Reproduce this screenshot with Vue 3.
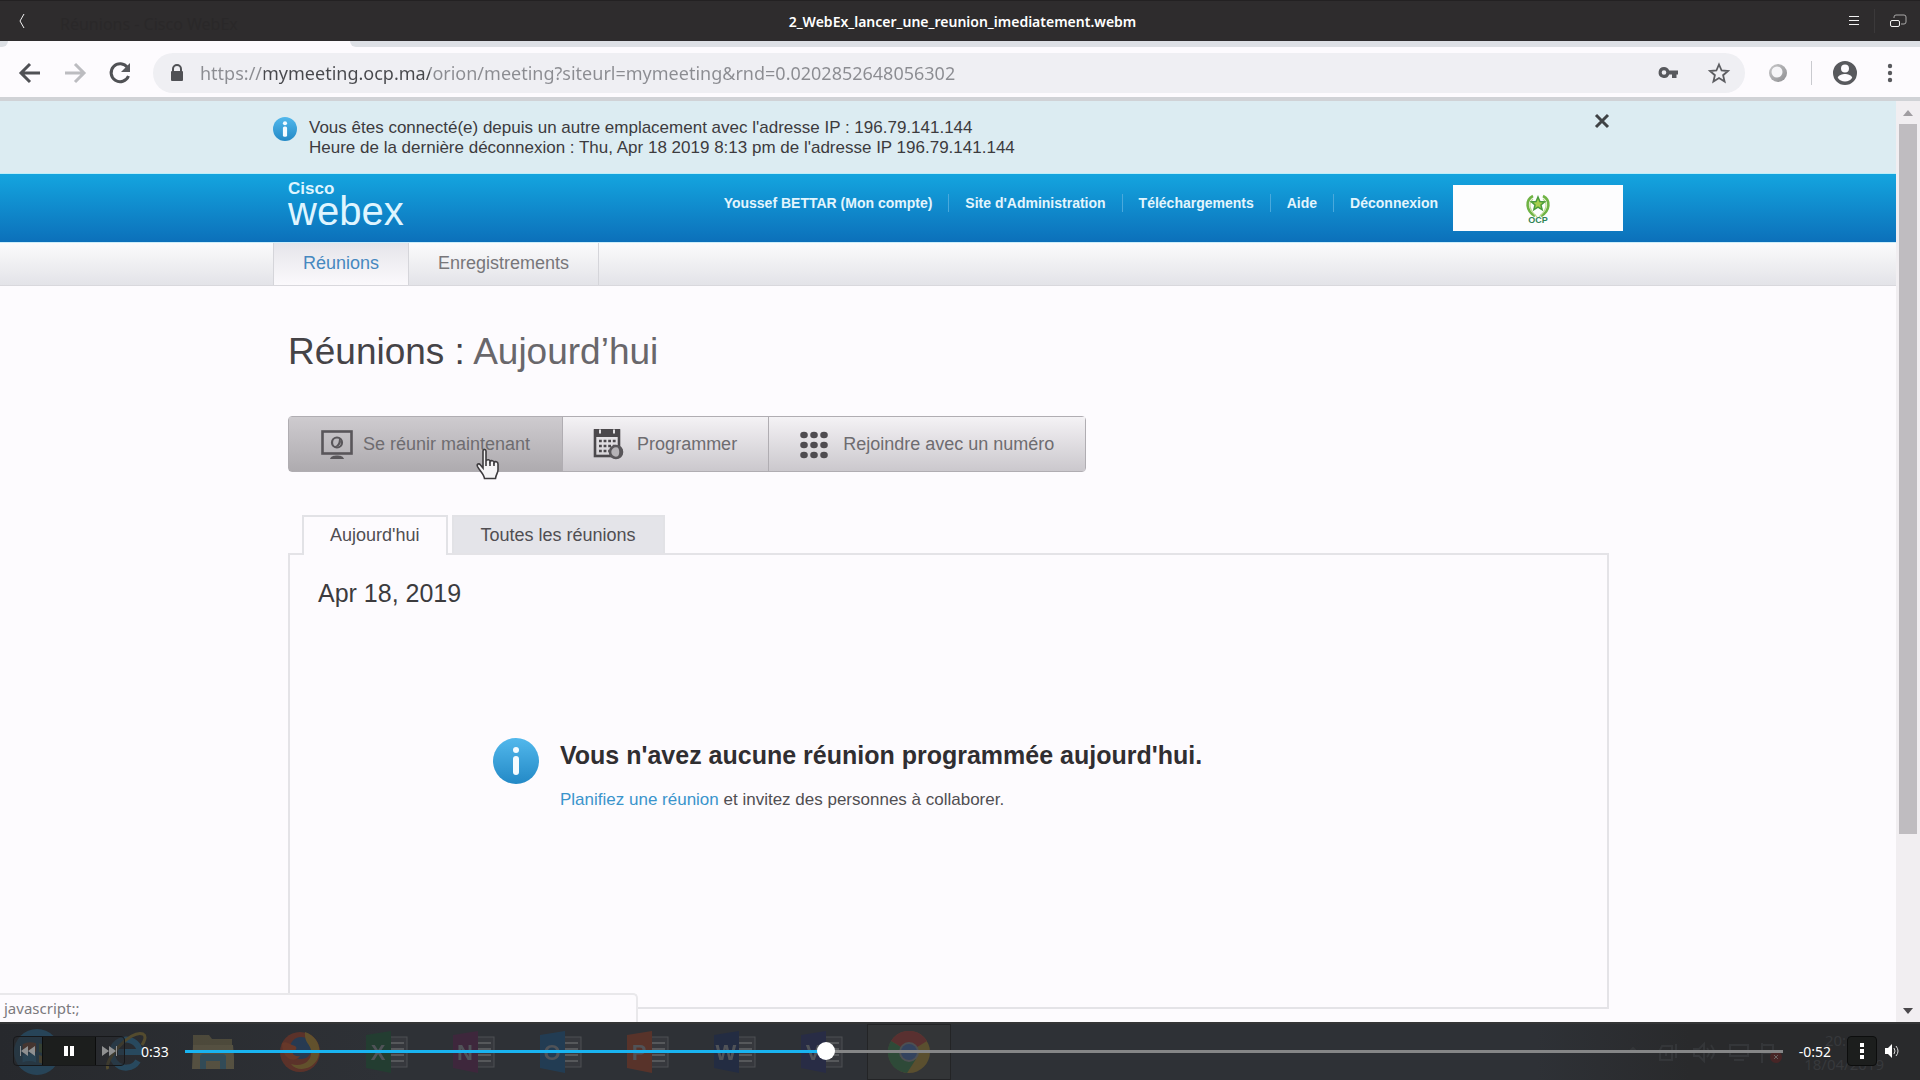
<template>
  <div class="player">
    <header class="title-bar">
      <button class="icon-btn back" aria-label="Retour">
        <svg width="8" height="16" viewBox="0 0 8 16"><path d="M6 1L2 8l4 7" /></svg>
      </button>
      <span class="ghost-tab">Réunions - Cisco WebEx</span>
      <h1 class="file-name">{{ fileName }}</h1>
      <div class="title-actions">
        <button class="icon-btn" aria-label="Menu">
          <svg width="12" height="12" viewBox="0 0 12 12"><path d="M1 1.5h10M1 5.5h10M1 9.5h10" /></svg>
        </button>
        <span class="title-sep"></span>
        <button class="icon-btn" aria-label="Restaurer">
          <svg width="18" height="16" viewBox="0 0 18 16">
            <path class="dim" d="M5 5V4a2 2 0 0 1 2-2h8a2 2 0 0 1 2 2v5a2 2 0 0 1-2 2h-3" />
            <rect x="1.5" y="7.5" width="9" height="6" rx="1.5" />
          </svg>
        </button>
      </div>
    </header>

    <section class="browser">
      <div class="tab-strip">
        <span class="strip-left"></span>
        <span class="strip-tab"></span>
        <span class="strip-rest"></span>
      </div>

      <div class="toolbar">
        <button class="nav-btn" aria-label="Page précédente">
          <svg viewBox="0 0 24 24"><path class="stroke" d="M22 12H4M12 3l-9 9 9 9" /></svg>
        </button>
        <button class="nav-btn disabled" aria-label="Page suivante">
          <svg viewBox="0 0 24 24"><path class="stroke" d="M2 12h18M12 3l9 9-9 9" /></svg>
        </button>
        <button class="nav-btn" aria-label="Actualiser">
          <svg viewBox="0 0 24 24">
            <path class="stroke" d="M19.5 6.5A9 9 0 1 0 20.5 15" />
            <path d="M22 2v9h-9z" />
          </svg>
        </button>
        <div class="omnibox">
          <svg class="lock" viewBox="0 0 16 20">
            <path d="M4 8V6a4 4 0 0 1 8 0v2" fill="none" stroke="#505155" stroke-width="2" />
            <rect x="2" y="8" width="12" height="10" rx="1" />
          </svg>
          <input v-model="url" class="url" type="text" aria-label="Adresse" spellcheck="false" />
          <button class="nav-btn" aria-label="Mots de passe">
            <svg viewBox="0 0 24 24">
              <path fill-rule="evenodd" d="M8 6a5.500 5.500 0 1 0 5.200 7.500H16V17h4.500v-3.500H22V9.500H13.200A5.500 5.500 0 0 0 8 6zM8 9.200a2.300 2.300 0 1 1 0 4.600 2.300 2.300 0 0 1 0-4.600z" />
            </svg>
          </button>
          <button class="nav-btn star" aria-label="Ajouter aux favoris">
            <svg viewBox="0 0 24 24">
              <path d="M12 3.500l2.600 6 6.400.5-4.900 4.200 1.500 6.300-5.600-3.400-5.600 3.400 1.500-6.300L3 10l6.400-.5z" fill="none" stroke="#5c5d61" stroke-width="1.800" />
            </svg>
          </button>
        </div>
        <button class="nav-btn" aria-label="Extension">
          <svg viewBox="0 0 24 24">
            <defs>
              <linearGradient id="ext" x1="0" y1="0" x2="1" y2="1">
                <stop offset="0" stop-color="#c9c9cb" />
                <stop offset="1" stop-color="#8d8d90" />
              </linearGradient>
            </defs>
            <circle cx="12" cy="12" r="9" fill="url(#ext)" />
            <circle cx="11" cy="11" r="5.500" fill="#f6f5f8" />
          </svg>
        </button>
        <span class="tool-sep"></span>
        <button class="nav-btn" aria-label="Profil">
          <svg viewBox="0 0 24 24">
            <path fill-rule="evenodd" d="M12 0a12 12 0 1 0 0 24 12 12 0 0 0 0-24zM12 3.600a4 4 0 1 1 0 8 4 4 0 0 1 0-8zM12 20.600a8.600 8.600 0 0 1-7.200-3.800c0-2.500 4.800-3.800 7.200-3.800s7.200 1.300 7.200 3.800A8.600 8.600 0 0 1 12 20.600z" />
          </svg>
        </button>
        <button class="nav-btn" aria-label="Options">
          <svg viewBox="0 0 24 24"><circle cx="12" cy="5" r="2.200" /><circle cx="12" cy="12" r="2.200" /><circle cx="12" cy="19" r="2.200" /></svg>
        </button>
      </div>

      <div class="viewport">
        <div class="page">
          <div class="notice">
            <div class="wrap notice-row">
              <svg class="info small" viewBox="0 0 46 46">
                <defs>
                  <linearGradient id="blue" x1="0" y1="0" x2="0" y2="1">
                    <stop offset="0" stop-color="#52b8ec" />
                    <stop offset="1" stop-color="#2389c6" />
                  </linearGradient>
                </defs>
                <circle cx="23" cy="23" r="23" fill="url(#blue)" />
                <circle cx="23" cy="12" r="4" fill="#f4fbff" />
                <rect x="19" y="18" width="8" height="20" rx="3" fill="#f4fbff" />
              </svg>
              <p class="notice-text">
                Vous êtes connecté(e) depuis un autre emplacement avec l'adresse IP : 196.79.141.144<br />
                Heure de la dernière déconnexion : Thu, Apr 18 2019 8:13 pm de l'adresse IP 196.79.141.144
              </p>
              <button class="close" aria-label="Fermer">
                <svg width="16" height="16" viewBox="0 0 16 16"><path d="M2 2l12 12M14 2L2 14" /></svg>
              </button>
            </div>
          </div>

          <div class="brand-bar">
            <div class="wrap brand-row">
              <a href="#" class="logo">
                <span class="logo-cisco">Cisco</span>
                <span class="logo-webex">webex</span>
              </a>
              <nav class="links">
                <a v-for="link in links" :key="link" href="#">{{ link }}</a>
              </nav>
              <div class="client">
                <svg width="28" height="32" viewBox="0 0 28 32">
                  <g fill="none" stroke="#6fb344" stroke-width="2.600">
                    <path d="M9 4C1 8 2 19 11 24" />
                    <path d="M19 4c8 4 7 15-2 20" />
                  </g>
                  <g fill="none" stroke="#b9d98f" stroke-width="1.200">
                    <path d="M9 7C4 11 5 18 13 25" />
                    <path d="M19 7c5 4 4 11-4 18" />
                  </g>
                  <path d="M14 5l1.900 4.500 4.700.4-3.600 3.100 1.100 4.700L14 15.200l-4.100 2.500L11 13 7.400 9.900l4.700-.4z" fill="#a8cf4d" stroke="#4a9c3c" stroke-width="1.500" />
                  <text x="14" y="31" text-anchor="middle">OCP</text>
                </svg>
              </div>
            </div>
          </div>

          <div class="menu-bar">
            <nav class="wrap menu-row">
              <a href="#" class="menu-item active">Réunions</a>
              <a href="#" class="menu-item">Enregistrements</a>
            </nav>
          </div>

          <main class="wrap content">
            <h2 class="heading">Réunions : <span>Aujourd’hui</span></h2>

            <div class="actions">
              <button class="action pressed">
                <svg width="32" height="32" viewBox="0 0 32 32">
                  <rect x="1.500" y="3.500" width="29" height="22" fill="none" stroke="#59565a" stroke-width="2.600" />
                  <circle cx="16" cy="14.500" r="5" fill="#bdbabe" stroke="#59565a" stroke-width="2.200" />
                  <path d="M18 10a5 5 0 0 1-5 8.500c4-1 5-4 5-8.500z" fill="#59565a" />
                  <path d="M9 31c1-3 4-3.500 7-3.500s6 .5 7 3.500z" fill="#59565a" />
                </svg>
                Se réunir maintenant
              </button>
              <button class="action">
                <svg width="32" height="32" viewBox="0 0 32 32">
                  <rect x="2" y="2.500" width="24" height="25.500" fill="none" stroke="#4b484c" stroke-width="2.600" />
                  <path d="M1 1h26v8H1z" fill="#4b484c" />
                  <path d="M7 1.500v4M21 1.500v4" stroke="#e3e1e4" stroke-width="2" />
                  <path d="M6 13h17M6 18h17M6 23h10" stroke="#4b484c" stroke-width="2.600" stroke-dasharray="2.800 1.800" />
                  <circle cx="23" cy="24" r="6" fill="#b5b2b6" stroke="#59565a" stroke-width="2.600" />
                  <path d="M24 18a6 6 0 0 1 0 12c3-4 3-8 0-12z" fill="#59565a" />
                </svg>
                Programmer
              </button>
              <button class="action">
                <svg width="32" height="32" viewBox="0 0 32 32">
                  <g v-for="row in 3" :key="row">
                    <ellipse v-for="col in 3" :key="col" :cx="col * 10 - 5" :cy="row * 10 - 3" rx="3.800" ry="3.200" fill="#4f4c50" />
                  </g>
                </svg>
                Rejoindre avec un numéro
              </button>
              <svg class="hand" width="26" height="34" viewBox="0 0 26 34">
                <path d="M8 3c0-2 3-2 3 0v10c1-2 4-1.500 4 .5 1-1.500 4-1 4 1 1-1.500 4-.8 4 1.500v6c0 3-2 4-2.500 8.500H9.500C9 26 4.500 22.500 2.500 18.500 1.500 16 4 15 5.500 17L8 20z" />
                <path d="M11 13v5M15 14v4M19 15v3" />
              </svg>
            </div>

            <div class="tabs">
              <button class="tab active">Aujourd'hui</button>
              <button class="tab">Toutes les réunions</button>
            </div>

            <section class="panel">
              <h3 class="date">Apr 18, 2019</h3>
              <div class="empty">
                <svg class="info" viewBox="0 0 46 46">
                  <circle cx="23" cy="23" r="23" fill="url(#blue)" />
                  <circle cx="23" cy="12" r="3" fill="#f4fbff" />
                  <rect x="20" y="18" width="6" height="19" rx="3" fill="#f4fbff" />
                </svg>
                <div>
                  <h4>Vous n'avez aucune réunion programmée aujourd'hui.</h4>
                  <p><a href="#">Planifiez une réunion</a> et invitez des personnes à collaborer.</p>
                </div>
              </div>
            </section>
          </main>
        </div>

        <div class="scrollbar">
          <svg width="10" height="6" viewBox="0 0 10 6"><path d="M0 6l5-6 5 6z" fill="#a09da1" /></svg>
          <div class="track"><div class="thumb"></div></div>
          <svg width="10" height="6" viewBox="0 0 10 6"><path d="M0 0l5 6 5-6z" fill="#4a484b" /></svg>
        </div>
        <div class="status">javascript:;</div>
      </div>
    </section>

    <footer class="controls">
      <!-- barre des tâches visible sous les commandes -->
      <div class="taskbar" aria-hidden="true">
        <div class="task start">
          <svg viewBox="0 0 50 50">
            <circle cx="25" cy="25" r="24" fill="#27506a" />
            <path d="M10 17q7-4 14-1v9q-7-3-14 0z" fill="#7d4b35" />
            <path d="M27 16q7 3 13 0v9q-6 3-13 0z" fill="#4e6a3b" />
            <path d="M10 28q7-3 14 0v8q-7-3-14 0z" fill="#2d6f96" />
            <path d="M27 28q7 3 13 0v8q-6 3-13 0z" fill="#7d6b36" />
          </svg>
        </div>
        <div class="task">
          <svg viewBox="0 0 42 42">
            <path d="M33 30a14 14 0 1 1 2-9H13" fill="none" stroke="#285672" stroke-width="6" />
            <path d="M3 38C-2 30 25-2 38 3c4 2 1 8-1 11" fill="none" stroke="#66592e" stroke-width="3" />
          </svg>
        </div>
        <div class="task">
          <svg viewBox="0 0 42 42">
            <path d="M1 4h16l3 4h20v28H1z" fill="#5c563f" />
            <path d="M1 14h40l2 24H0z" fill="#686048" />
            <path d="M8 38V26q0-3 3-3h20q3 0 3 3v12h-6v-8H14v8z" fill="#365868" />
          </svg>
        </div>
        <div class="task">
          <svg viewBox="0 0 42 42">
            <circle cx="21" cy="21" r="20" fill="#703426" />
            <circle cx="22" cy="17" r="11" fill="#25405f" />
            <path d="M26 1c12 4 18 16 12 28-6 10-20 12-26 4 12 4 22-4 20-14-1-6-7-8-6-18z" fill="#79602a" />
            <path d="M3 12c4-2 6 0 10 2 5 1 6 4 2 6-3 2 0 6 6 5-6 8-18 3-18-13z" fill="#803c25" />
          </svg>
        </div>
        <div v-for="(app, i) in apps" :key="i" class="task">
          <svg viewBox="0 0 42 42">
            <rect x="22" y="6" width="19" height="30" fill="#3a3c40" stroke="#5b5d60" />
            <path d="M25 12h13M25 18h13M25 24h13M25 30h13" stroke="#67696b" stroke-width="2" />
            <path d="M0 4l25-4v42L0 37z" :fill="app.color" />
            <text x="12" y="29" text-anchor="middle">{{ app.letter }}</text>
          </svg>
        </div>
        <div class="task current">
          <svg viewBox="0 0 42 42">
            <circle cx="21" cy="21" r="21" fill="#6b5a2c" />
            <path d="M21 21L3 10a21 21 0 0 1 36 0z" fill="#6a2f2e" />
            <path d="M21 21L3 10a21 21 0 0 0 16 32l9-14z" fill="#2c5339" />
            <circle cx="21" cy="21" r="10" fill="#595c60" />
            <circle cx="21" cy="21" r="8" fill="#34496f" />
          </svg>
        </div>
        <div class="tray">
          <svg width="164" height="24" viewBox="0 0 164 24" fill="none" stroke="#343639" stroke-width="2">
            <path d="M3 12l4-4 4 4z" fill="#343639" />
            <path d="M36 6h10v14H34V10zM50 4v14M40 10v6" />
            <path d="M68 9h5l5-5v17l-5-5h-5zM81 8q4 5 0 9M85 5q6 8 0 14" />
            <path d="M104 5h18v11h-18zM108 20h10" />
            <path d="M136 3v20M137 5h10v8h-10" />
            <circle cx="150" cy="17" r="6" fill="#472526" stroke="none" />
            <path d="M148 15l4 4M152 15l-4 4" stroke="#6a6463" stroke-width="1" />
          </svg>
          <p class="clock">20:13<br />18/04/2019</p>
        </div>
      </div>

      <div class="transport">
        <button aria-label="Précédent">
          <svg width="16" height="10" viewBox="0 0 16 10"><path d="M0 0h1v10H0zM8 0v10L1 5zM15 0v10L8 5z" fill="#8f9091" /></svg>
        </button>
        <button class="play" aria-label="Pause" @click="paused = !paused">
          <svg width="10" height="10" viewBox="0 0 10 10">
            <path v-if="paused" d="M0 0l10 5-10 5z" fill="#fff" />
            <path v-else d="M0 0h4v10H0zM6 0h4v10H6z" fill="#fff" />
          </svg>
        </button>
        <button aria-label="Suivant">
          <svg width="16" height="10" viewBox="0 0 16 10"><path d="M14 0h1v10h-1zM0 0v10l7-5zM7 0v10l7-5z" fill="#8f9091" /></svg>
        </button>
      </div>
      <span class="time">0:33</span>
      <input v-model="progress" class="seek" type="range" min="0" max="100" aria-label="Position" :style="{ '--played': progress + '%' }" />
      <span class="time">-0:52</span>
      <button class="more" aria-label="Plus d'options">
        <svg width="4" height="16" viewBox="0 0 4 16"><path d="M0 0h4v4H0zM0 6h4v4H0zM0 12h4v4H0z" fill="#fff" /></svg>
      </button>
      <button class="volume" aria-label="Volume">
        <svg width="16" height="14" viewBox="0 0 16 14">
          <path d="M0 4h3l4-4v14l-4-4H0z" fill="#fff" />
          <path d="M9 4q2 3 0 6M11 2q4 5 0 10" fill="none" stroke="#dcdcdc" />
        </svg>
      </button>
    </footer>
  </div>
</template>

<script setup>
import { ref } from 'vue'

const fileName = '2_WebEx_lancer_une_reunion_imediatement.webm'
const url = ref('https://mymeeting.ocp.ma/orion/meeting?siteurl=mymeeting&rnd=0.0202852648056302')
const progress = ref(40)
const paused = ref(false)

const links = [
  'Youssef BETTAR (Mon compte)',
  "Site d'Administration",
  'Téléchargements',
  'Aide',
  'Déconnexion',
]

const apps = [
  { letter: 'X', color: '#1f4330' },
  { letter: 'N', color: '#45243f' },
  { letter: 'O', color: '#1d4260' },
  { letter: 'P', color: '#6b3426' },
  { letter: 'W', color: '#1f2a48' },
  { letter: 'V', color: '#262b4c' },
]
</script>

<style>
body {
  margin: 0;
}
</style>

<style scoped>
* {
  box-sizing: border-box;
}
.player {
  display: flex;
  flex-direction: column;
  min-height: 100vh;
  font-family: "Liberation Sans", Arial, sans-serif;
  color: #3c3b3e;
  background: #fdfbfe;
}
button {
  margin: 0;
  padding: 0;
  border: none;
  background: none;
  font-family: inherit;
  cursor: pointer;
}
svg {
  display: block;
  flex: none;
}
a {
  text-decoration: none;
}
h1,
h2,
h3,
h4,
p {
  margin: 0;
  font-weight: normal;
}

/* barre de titre */
.title-bar {
  display: grid;
  grid-template-columns: 1fr auto 1fr;
  align-items: center;
  height: 41px;
  padding: 0 13px 0 18px;
  border-top: 1px solid #232122;
  background: #2e2c2d;
  position: relative;
}
.icon-btn svg {
  fill: none;
  stroke: #f2f2f2;
}
.icon-btn .dim {
  stroke: #a9a8a8;
}
.back {
  justify-self: start;
}
.ghost-tab {
  position: absolute;
  left: 60px;
  top: 12px;
  font: 16px "Noto Sans", sans-serif;
  color: #2a2829;
}
.file-name {
  font: 600 14px "Noto Sans", sans-serif;
  color: #fff;
}
.title-actions {
  display: flex;
  align-items: center;
  justify-content: flex-end;
  gap: 14px;
}
.title-sep {
  width: 1px;
  height: 24px;
  background: #3b393a;
}

/* navigateur */
.browser {
  display: flex;
  flex-direction: column;
  flex: 1;
}
.tab-strip {
  display: flex;
  height: 6px;
}
.strip-left {
  width: 8px;
  background: #dde0e5;
  border-bottom-right-radius: 6px;
}
.strip-tab {
  width: 342px;
}
.strip-rest {
  flex: 1;
  background: #dde0e5;
  border-bottom-left-radius: 6px;
}
.toolbar {
  display: flex;
  align-items: center;
  gap: 21px;
  height: 54px;
  padding: 2px 18px 0;
  border-bottom: 4px solid #d0d2d6;
}
.nav-btn {
  width: 24px;
  height: 24px;
  flex: none;
}
.nav-btn svg {
  width: 24px;
  height: 24px;
  fill: #58595d;
}
.nav-btn .stroke {
  fill: none;
  stroke: #505155;
  stroke-width: 3;
}
.nav-btn.disabled .stroke {
  stroke: #bcbcc0;
}
.omnibox {
  display: flex;
  align-items: center;
  flex: 1;
  height: 40px;
  padding: 0 14px 0 16px;
  border-radius: 20px;
  background: #efeff3;
}
.lock {
  width: 16px;
  height: 20px;
  fill: #505155;
}
.url {
  flex: 1;
  margin-left: 15px;
  padding: 0;
  border: none;
  outline: none;
  font: 18px/30px "Noto Sans", sans-serif;
  color: transparent;
  background: linear-gradient(90deg, #8b8c91 64px, #47484c 64px, #47484c 230px, #8b8c91 230px);
  background-clip: text;
}
.star {
  margin-left: 27px;
}
.tool-sep {
  width: 1px;
  height: 24px;
  background: #c9cacf;
}

.viewport {
  display: flex;
  flex: 1;
  position: relative;
}
.page {
  display: flex;
  flex-direction: column;
  flex: 1;
}
.wrap {
  width: 100%;
  max-width: 1350px;
  margin: 0 auto;
}

.notice {
  background: #dcecf2;
  border-bottom: 1px solid #bdeef8;
}
.notice-row {
  display: flex;
  align-items: flex-start;
  gap: 12px;
  padding: 16px 13px 15px 0;
}
.info {
  width: 46px;
  height: 46px;
}
.info.small {
  width: 24px;
  height: 24px;
}
.notice-text {
  flex: 1;
  padding-top: 1px;
  font-size: 17px;
  line-height: 20px;
}
.close svg {
  stroke: #404346;
  stroke-width: 3;
}
.close {
  margin-top: -4px;
}

.brand-bar {
  background: linear-gradient(#14a5df, #0c70ba);
}
.brand-row {
  display: flex;
  align-items: flex-start;
  height: 68px;
  padding: 8px 0 0 15px;
}
.logo {
  display: flex;
  flex-direction: column;
  color: #dff5ff;
}
.logo-cisco {
  font-size: 17px;
  line-height: 14px;
  font-weight: bold;
}
.logo-webex {
  font-size: 40px;
  line-height: 30px;
}
.links {
  display: flex;
  flex: 1;
  justify-content: flex-end;
  margin: 12px 15px 0 0;
}
.links a {
  padding-left: 16px;
  font-size: 14px;
  line-height: 18px;
  font-weight: bold;
  color: #e3f5fd;
}
.links a + a {
  margin-left: 16px;
  border-left: 1px solid #4aa9dc;
}
.client {
  display: flex;
  align-items: center;
  justify-content: center;
  width: 170px;
  height: 46px;
  margin-top: 3px;
  background: #fdfdfe;
}
.client text {
  font: bold 9px "Liberation Sans", sans-serif;
  fill: #2f8454;
}

.menu-bar {
  background: linear-gradient(#fbfbfc, #e3e3e8);
  border-top: 1px solid #cdeefa;
  border-bottom: 1px solid #d9d8dd;
}
.menu-row {
  display: flex;
}
.menu-item {
  padding: 0 29px 2px;
  border-right: 1px solid #d5d5da;
  font-size: 18px;
  line-height: 40px;
  color: #77767a;
}
.menu-item.active {
  border-left: 1px solid #d5d5da;
  background: linear-gradient(#e6e5ea, #fbf9fc);
  color: #4688c0;
}

.content {
  display: flex;
  flex-direction: column;
  flex: 1;
  padding: 45px 14px 13px 15px;
}
.heading {
  font-size: 37px;
  line-height: 42px;
  color: #454347;
}
.heading span {
  color: #69676b;
}
.actions {
  display: flex;
  align-self: flex-start;
  position: relative;
  margin-top: 43px;
  border: 1px solid #b0adb2;
  border-radius: 4px;
}
.action {
  display: flex;
  align-items: center;
  gap: 12px;
  height: 54px;
  padding: 0 31px 0 30px;
  background: linear-gradient(#f4f2f5, #cbc8cd);
  font-size: 18px;
  color: #6e6c70;
}
.action + .action {
  border-left: 1px solid #b0adb2;
}
.action.pressed {
  gap: 10px;
  padding: 0 32px;
  background: linear-gradient(#cecbcf, #aeabaf);
}
.hand {
  position: absolute;
  left: 186px;
  top: 31px;
  fill: #f5f4f6;
  stroke: #3d3b3e;
  stroke-width: 1.6;
}

.tabs {
  display: flex;
  gap: 4px;
  margin-top: 43px;
  padding-left: 14px;
}
.tab {
  height: 38px;
  padding: 0 27px;
  border: 2px solid #e2e2e6;
  border-bottom: none;
  background: #e4e4e9;
  font-size: 18px;
  color: #504e52;
}
.tab.active {
  margin-bottom: -2px;
  padding: 0 26px 2px;
  height: 40px;
  background: #fdfbfe;
  z-index: 1;
}
.panel {
  flex: 1;
  padding: 22px 28px;
  border: 2px solid #e4e3e7;
}
.date {
  font-size: 25px;
  line-height: 32px;
}
.empty {
  display: flex;
  gap: 21px;
  padding: 129px 0 127px 175px;
}
.empty h4 {
  font-size: 25px;
  line-height: 34px;
  font-weight: bold;
  color: #302e31;
}
.empty p {
  margin-top: 18px;
  font-size: 17px;
  line-height: 20px;
  color: #504e52;
}
.empty a {
  color: #3a94cc;
}

.scrollbar {
  display: flex;
  flex-direction: column;
  align-items: center;
  width: 24px;
  padding: 9px 0 8px;
  gap: 8px;
  background: #f1eef1;
}
.track {
  flex: 1;
  width: 18px;
}
.thumb {
  height: 81%;
  background: #bfbcc0;
}
.status {
  position: absolute;
  left: 0;
  bottom: 0;
  width: 638px;
  padding-left: 4px;
  border: 2px solid #e9e8eb;
  border-left: none;
  border-bottom: none;
  border-top-right-radius: 5px;
  background: #fdfbfe;
  font: 15px/27px "Noto Sans", sans-serif;
  color: #7b797d;
}

/* commandes de lecture */
.controls {
  display: flex;
  align-items: center;
  gap: 16px;
  height: 58px;
  padding: 0 19px 2px 13px;
  border-top: 2px solid #343536;
  background: linear-gradient(90deg, #27292d, #2e3136 20%, #2e3136 80%, #292a2c 88%);
  position: relative;
  isolation: isolate;
}
.taskbar {
  position: absolute;
  inset: 0;
  z-index: -1;
  display: flex;
  align-items: center;
}
.task {
  display: flex;
  align-items: center;
  justify-content: center;
  width: 87px;
  height: 100%;
}
.task svg {
  width: 42px;
  height: 42px;
  opacity: 0.7;
}
.task.start {
  width: 82px;
  padding-right: 8px;
}
.task.start svg {
  width: 48px;
  height: 48px;
}
.task text {
  font: bold 22px "Liberation Sans", sans-serif;
  fill: #5f6267;
}
.task.current {
  width: 84px;
  margin-left: 2px;
  border: 1px solid #232426;
  background: #333537;
}
.tray {
  display: flex;
  align-items: center;
  gap: 14px;
  margin-left: auto;
  padding-right: 36px;
}
.clock {
  font: 15px/24px "Noto Sans", sans-serif;
  text-align: center;
  color: #37393c;
}
.transport {
  display: flex;
  border: 1px solid #17181a;
  border-radius: 4px;
  background: rgba(40, 42, 46, 0.5);
}
.transport button {
  display: flex;
  align-items: center;
  justify-content: center;
  width: 28px;
  height: 28px;
}
.transport .play {
  width: 54px;
  background: #1c1e1d;
  border: solid #0c0d0d;
  border-width: 0 1px;
}
.time {
  font: 14px "Noto Sans", sans-serif;
  color: #fff;
}
.seek {
  flex: 1;
  height: 18px;
  margin: 0;
  appearance: none;
  background: none;
}
.seek::-webkit-slider-runnable-track {
  height: 3px;
  background: linear-gradient(90deg, #19b4f1 var(--played), #858687 var(--played));
}
.seek::-webkit-slider-thumb {
  appearance: none;
  width: 18px;
  height: 18px;
  margin-top: -8px;
  border-radius: 50%;
  background: #fff;
}
.more {
  display: flex;
  align-items: center;
  justify-content: center;
  width: 30px;
  height: 30px;
  border: 1px solid #0c0d0d;
  border-radius: 4px;
  background: #1c1e1d;
}
.volume {
  margin-left: -8px;
}
</style>
